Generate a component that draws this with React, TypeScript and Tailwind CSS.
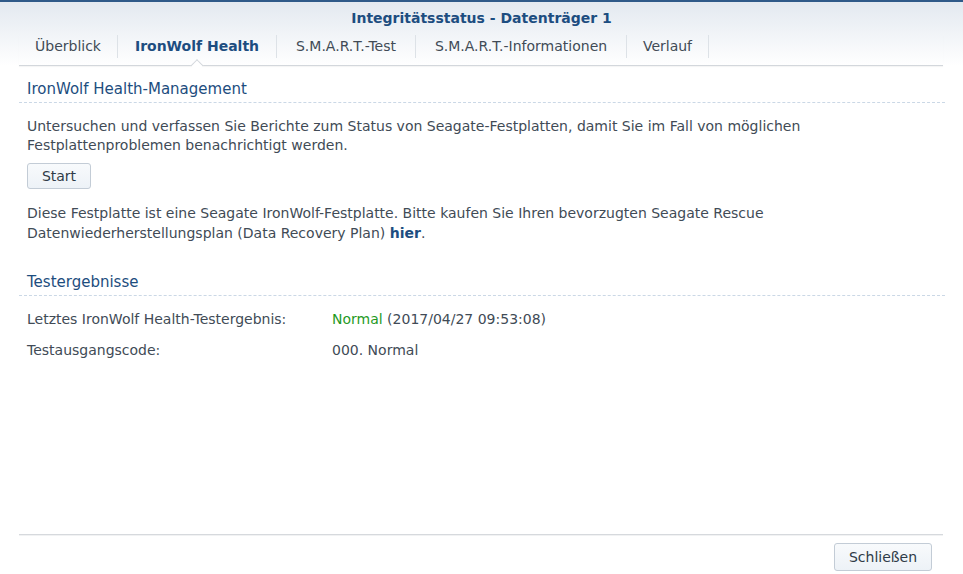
import React from 'react';

const tabs = [
  { label: 'Überblick', w: 'w-[99px]' },
  { label: 'IronWolf Health', w: 'w-[159px]' },
  { label: 'S.M.A.R.T.-Test', w: 'w-[139px]' },
  { label: 'S.M.A.R.T.-Informationen', w: 'w-[211px]' },
  { label: 'Verlauf', w: 'w-[82px]' },
];

const SectionTitle = ({ children }: { children: React.ReactNode }) => (
  <div className="border-b border-dashed border-[#cbd8e6] pl-2 pb-[3px] text-[15px] leading-[19px] text-[#1d4d7e]">
    {children}
  </div>
);

const Button = ({ children, className = '' }: { children: React.ReactNode; className?: string }) => (
  <button
    className={`h-[26px] rounded-[3px] border border-[#c3ccd6] bg-gradient-to-b from-[#f8fafc] to-[#edf2f7] text-[14px] text-[#2f3b47] ${className}`}
  >
    {children}
  </button>
);

const App = () => {
  return (
    <div
      className="flex h-[574px] w-[963px] flex-col overflow-hidden bg-white text-[14px] text-[#414b56]"
      style={{ fontFamily: '"DejaVu Sans", Verdana, sans-serif' }}
    >
      <div className="h-[2px] bg-[#2f5a89]" />
      {/* Kopfbereich */}
      <div className="bg-gradient-to-b from-[#e3e9f0] to-white">
        <div className="flex h-[33px] items-center justify-center text-[14px] font-bold text-[#1d4d80]">
          Integritätsstatus - Datenträger 1
        </div>
        <div className="relative mx-[19px] mr-[20px] flex h-[31px] border-b border-[#d3d7dc] shadow-[0_1px_1px_rgba(0,0,0,0.04)]">
          {tabs.map((t, i) => (
            <div
              key={t.label}
              className={`relative flex h-[23px] items-center justify-center border-r border-[#dde2e7] ${t.w} ${
                i === 1 ? 'font-bold text-[#1d4d80]' : 'text-[#414b56]'
              }`}
            >
              {t.label}
              {i === 1 && (
                <span className="absolute bottom-[-12px] left-1/2 h-[9px] w-[9px] -translate-x-1/2 rotate-45 border-l border-t border-[#d3d7dc] bg-white" />
              )}
            </div>
          ))}
        </div>
      </div>

      {/* Inhalt */}
      <div className="mx-[19px] mr-[18px] flex flex-1 flex-col pt-[14px]">
        <SectionTitle>IronWolf Health-Management</SectionTitle>
        <div className="pl-2 pt-[14px] leading-[19px]">
          Untersuchen und verfassen Sie Berichte zum Status von Seagate-Festplatten, damit Sie im Fall von möglichen
          <br />
          Festplattenproblemen benachrichtigt werden.
        </div>
        <div className="pl-2 pt-[8px]">
          <Button className="w-[64px]">Start</Button>
        </div>
        <div className="pl-2 pt-[14px] leading-[20px]">
          Diese Festplatte ist eine Seagate IronWolf-Festplatte. Bitte kaufen Sie Ihren bevorzugten Seagate Rescue
          <br />
          Datenwiederherstellungsplan (Data Recovery Plan) <span className="font-bold text-[#1d4d80]">hier</span>.
        </div>
        <div className="pt-[30px]">
          <SectionTitle>Testergebnisse</SectionTitle>
        </div>
        <div className="flex pl-2 pt-[14px] leading-[19px]">
          <div className="w-[305px]">Letztes IronWolf Health-Testergebnis:</div>
          <div>
            <span className="text-[#1f9a1f]">Normal</span> (2017/04/27 09:53:08)
          </div>
        </div>
        <div className="flex pl-2 pt-[12px] leading-[19px]">
          <div className="w-[305px]">Testausgangscode:</div>
          <div>000. Normal</div>
        </div>
      </div>

      {/* Fußzeile */}
      <div className="mx-[19px] mr-[20px] h-[2px] border-t border-[#d6d9dd] bg-[#f1f2f3]" />
      <div className="flex h-[38px] justify-end pr-[31px] pt-[7px]">
        <Button className="h-[28px] w-[98px]">Schließen</Button>
      </div>
    </div>
  );
};

export default App;
